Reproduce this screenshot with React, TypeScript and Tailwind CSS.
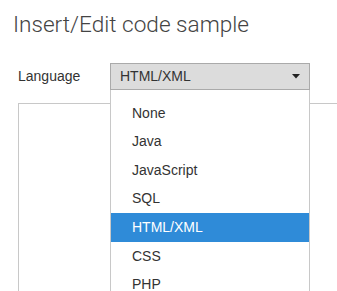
import { useState } from "react";

const languages = ["None", "Java", "JavaScript", "SQL", "HTML/XML", "CSS", "PHP"];

export default function App() {
  const [selected] = useState("HTML/XML");

  return (
    <div
      className="relative w-[337px] h-[291px] overflow-hidden bg-white text-[#333]"
      style={{ fontFamily: '"Liberation Sans", Arial, sans-serif' }}
    >
      <h1
        className="pl-[13px] pt-[14px] text-[22.6px] leading-[22px] font-light text-[#444]"
        style={{ fontFamily: 'Roboto, "Liberation Sans", sans-serif' }}
      >
        Insert/Edit code sample
      </h1>

      <div className="mt-[27px] flex items-center pl-[18px]">
        <label className="w-[92px] text-[14px]">Language</label>
        <div className="flex h-[27px] w-[200px] items-center justify-between border border-[#aaa] bg-[#dcdcdc] pl-[9px] pr-[9px] text-[14px]">
          <span>{selected}</span>
          <svg width="8" height="5" viewBox="0 0 8 5">
            <path d="M0 0h8L4 4.5z" fill="#222" />
          </svg>
        </div>
      </div>

      {/* code area */}
      <div className="ml-[18px] mt-[13px] h-[220px] w-[340px] border border-[#c8c8c8]" />

      {/* open dropdown */}
      <ul className="absolute left-[110px] top-[90px] h-[210px] w-[200px] border-x border-[#c8c8c8] bg-white pt-[8.7px] text-[14px]">
        {languages.map((lang) => (
          <li
            key={lang}
            className={`flex h-[28.67px] items-center pl-[21px] ${
              lang === selected ? "bg-[#2f8bd8] text-white" : "text-[#333]"
            }`}
          >
            {lang}
          </li>
        ))}
      </ul>
    </div>
  );
}
